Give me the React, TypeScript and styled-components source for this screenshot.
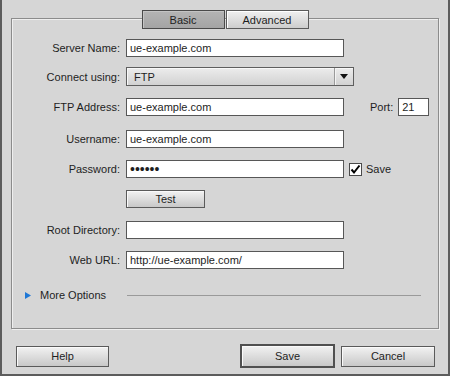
import styled, { createGlobalStyle } from "styled-components";

const GlobalStyle = createGlobalStyle`
  body {
    margin: 0;
    font-family: "Liberation Sans", Arial, sans-serif;
    font-size: 11px;
    color: #1e1e1e;
  }
`;

const Window = styled.div`
  width: 450px;
  height: 376px;
  box-sizing: border-box;
  background: #d6d6d6;
  border: 2px solid #5c5c5c;
  border-top: none;
  padding-top: 18px;
  display: flex;
  flex-direction: column;
`;

const Group = styled.div`
  margin-left: 9px;
  width: 428px;
  height: 311px;
  box-sizing: border-box;
  border: 1px solid #8c8c8c;
  box-shadow: inset 1px 1px 0 #efefef, 1px 1px 0 #efefef;
  display: flex;
  flex-direction: column;
`;

const TabBar = styled.div`
  display: flex;
  justify-content: center;
  gap: 1px;
  margin-top: -9px;
`;

const Tab = styled.div<{ $active?: boolean }>`
  width: 83px;
  height: 19px;
  box-sizing: border-box;
  display: flex;
  align-items: center;
  justify-content: center;
  font-size: 11px;
  border: 1px solid ${(p) => (p.$active ? "#4a4a4a" : "#5a5a5a")};
  background: ${(p) =>
    p.$active
      ? "linear-gradient(#b4b4b4, #a4a4a4)"
      : "linear-gradient(#f0f0f0, #cdcdcd)"};
  box-shadow: inset 1px 1px 0 ${(p) => (p.$active ? "#c4c4c4" : "#ffffff")};
`;

const Form = styled.div`
  display: flex;
  flex-direction: column;
`;

const Row = styled.div<{ $mt: number; $h?: number }>`
  display: flex;
  align-items: center;
  margin-top: ${(p) => p.$mt}px;
  height: ${(p) => p.$h ?? 18}px;
`;

const Label = styled.div`
  width: 108px;
  margin-right: 6px;
  text-align: right;
  white-space: nowrap;
`;

const Field = styled.input<{ $w?: number; $secret?: boolean }>`
  width: ${(p) => p.$w ?? 218}px;
  height: 18px;
  box-sizing: border-box;
  border: 1px solid #575757;
  background: #fff;
  padding: 0 0 0 3px;
  font-family: inherit;
  font-size: ${(p) => (p.$secret ? 14 : 11)}px;
  color: #1e1e1e;
  outline: none;
  margin: 0;
`;

const Select = styled.div`
  width: 228px;
  height: 19px;
  box-sizing: border-box;
  border: 1px solid #5e5e5e;
  background: linear-gradient(#ececec, #d2d2d2);
  box-shadow: inset 1px 1px 0 #f8f8f8;
  display: flex;
  align-items: center;
`;

const SelectText = styled.span`
  flex: 1;
  padding-left: 7px;
`;

const SelectArrow = styled.span`
  width: 18px;
  height: 100%;
  border-left: 1px solid #9a9a9a;
  box-shadow: inset 1px 0 0 #f4f4f4;
  display: flex;
  align-items: center;
  justify-content: center;
`;

const PortLabel = styled.span`
  margin-left: 26px;
  margin-right: 5px;
`;

const CheckBox = styled.span`
  width: 13px;
  height: 13px;
  box-sizing: border-box;
  margin-left: 5px;
  margin-right: 4px;
  border: 1px solid #4a4a4a;
  background: #fff;
  display: flex;
  align-items: center;
  justify-content: center;
`;

const Button = styled.button<{ $w: number; $default?: boolean }>`
  width: ${(p) => p.$w}px;
  height: ${(p) => (p.$default ? 24 : 21)}px;
  box-sizing: border-box;
  padding: 0;
  margin: 0;
  font-family: inherit;
  font-size: 11px;
  color: #1e1e1e;
  border: ${(p) => (p.$default ? "2px solid #505050" : "1px solid #5a5a5a")};
  background: linear-gradient(#f2f2f2, #c8c8c8);
  box-shadow: inset 1px 1px 0 #fafafa;
`;

const TestButton = styled(Button)`
  height: 18px;
`;

const More = styled.div`
  display: flex;
  align-items: center;
  margin-top: 19px;
  height: 14px;
  padding-left: 13px;
  padding-right: 17px;
`;

const MoreText = styled.span`
  margin-left: 9px;
  margin-right: 21px;
`;

const Rule = styled.div`
  flex: 1;
  height: 1px;
  background: #9a9a9a;
`;

const Footer = styled.div`
  display: flex;
  align-items: center;
  justify-content: space-between;
  padding: 0 13px 0 14px;
  margin-top: 15px;
  height: 24px;
`;

const FooterRight = styled.div`
  display: flex;
  align-items: center;
  gap: 6px;
`;

export default function App() {
  return (
    <>
      <GlobalStyle />
      <Window>
        <Group>
          <TabBar>
            <Tab $active>Basic</Tab>
            <Tab>Advanced</Tab>
          </TabBar>
          <Form>
            <Row $mt={10}>
              <Label>Server Name:</Label>
              <Field readOnly defaultValue="ue-example.com" />
            </Row>
            <Row $mt={10} $h={19}>
              <Label>Connect using:</Label>
              <Select>
                <SelectText>FTP</SelectText>
                <SelectArrow>
                  <svg width="8" height="6" viewBox="0 0 8 6">
                    <path d="M0 0 H8 L4 5 Z" fill="#111" />
                  </svg>
                </SelectArrow>
              </Select>
            </Row>
            <Row $mt={12}>
              <Label>FTP Address:</Label>
              <Field readOnly defaultValue="ue-example.com" />
              <PortLabel>Port:</PortLabel>
              <Field $w={31} readOnly defaultValue="21" />
            </Row>
            <Row $mt={14}>
              <Label>Username:</Label>
              <Field readOnly defaultValue="ue-example.com" />
            </Row>
            <Row $mt={12}>
              <Label>Password:</Label>
              <Field $secret type="password" readOnly defaultValue="secret" />
              <CheckBox>
                <svg width="11" height="11" viewBox="0 0 11 11">
                  <path d="M1.5 5.5 L4 8.5 L9.5 1.5" stroke="#000" strokeWidth="2" fill="none" />
                </svg>
              </CheckBox>
              <span>Save</span>
            </Row>
            <Row $mt={12}>
              <Label />
              <TestButton $w={79}>Test</TestButton>
            </Row>
            <Row $mt={13}>
              <Label>Root Directory:</Label>
              <Field readOnly defaultValue="" />
            </Row>
            <Row $mt={12}>
              <Label>Web URL:</Label>
              <Field readOnly defaultValue="http://ue-example.com/" />
            </Row>
          </Form>
          <More>
            <svg width="6" height="7" viewBox="0 0 6 7">
              <path d="M0 0 L6 3.5 L0 7 Z" fill="#1f78d6" />
            </svg>
            <MoreText>More Options</MoreText>
            <Rule />
          </More>
        </Group>
        <Footer>
          <Button $w={93}>Help</Button>
          <FooterRight>
            <Button $w={95} $default>
              Save
            </Button>
            <Button $w={94}>Cancel</Button>
          </FooterRight>
        </Footer>
      </Window>
    </>
  );
}
